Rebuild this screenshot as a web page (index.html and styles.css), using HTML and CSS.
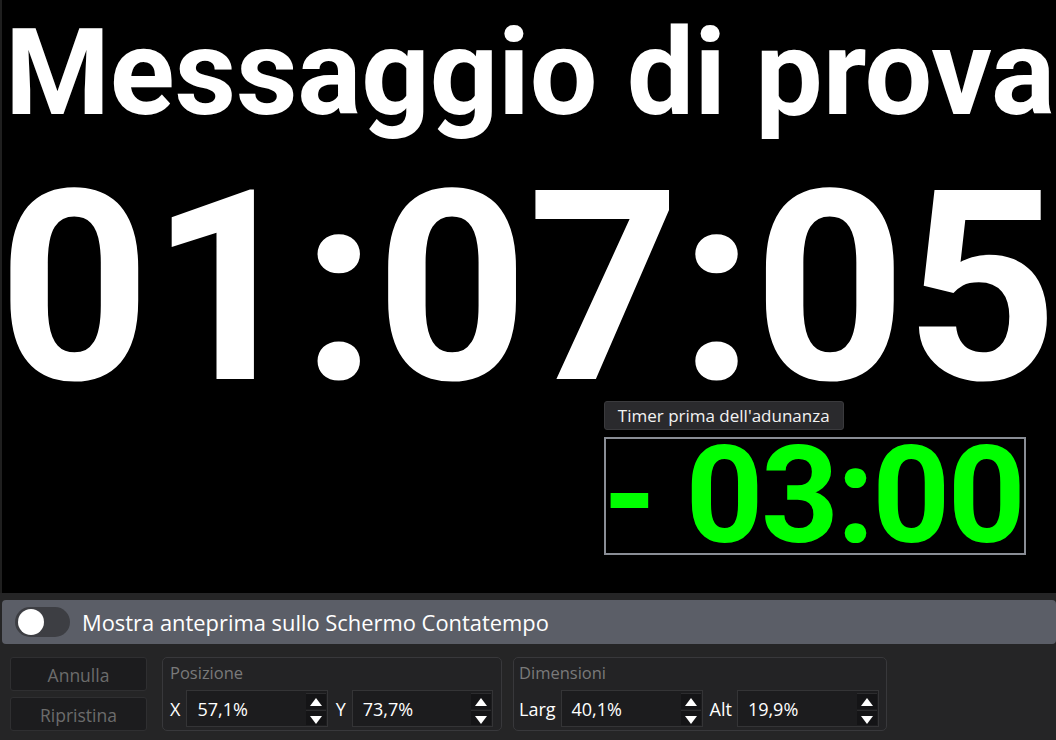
FILE: index.html
```html
<!DOCTYPE html>
<html lang="it">
<head>
<meta charset="utf-8">
<title>Contatempo</title>
<link rel="stylesheet" href="styles.css">
</head>
<body>
<div class="app">
  <div class="stage">
    <div class="title">Messaggio di prova</div>
    <div class="clock">01:07:05</div>
    <div class="overlay" style="left:57.1%;top:73.7%;width:40.1%;height:19.9%;">
      <div class="overlay-label">Timer prima dell'adunanza</div>
      <div class="overlay-box"><div class="overlay-time">- 03:00</div></div>
    </div>
  </div>
  <div class="panel">
    <div class="toggle-bar">
      <span class="switch"><span class="knob"></span></span>
      <span class="toggle-text">Mostra anteprima sullo Schermo Contatempo</span>
    </div>
    <div class="controls">
      <div class="btns">
        <div class="btn">Annulla</div>
        <div class="btn">Ripristina</div>
      </div>
      <div class="group group-pos">
        <div class="group-title">Posizione</div>
        <div class="group-row">
          <span class="field-label">X</span>
          <div class="spin"><span class="spin-value">57,1%</span><span class="spin-btns"><span class="spin-up"></span><span class="spin-down"></span></span></div>
          <span class="field-label">Y</span>
          <div class="spin"><span class="spin-value">73,7%</span><span class="spin-btns"><span class="spin-up"></span><span class="spin-down"></span></span></div>
        </div>
      </div>
      <div class="group group-dim">
        <div class="group-title">Dimensioni</div>
        <div class="group-row">
          <span class="field-label">Larg</span>
          <div class="spin"><span class="spin-value">40,1%</span><span class="spin-btns"><span class="spin-up"></span><span class="spin-down"></span></span></div>
          <span class="field-label">Alt</span>
          <div class="spin"><span class="spin-value">19,9%</span><span class="spin-btns"><span class="spin-up"></span><span class="spin-down"></span></span></div>
        </div>
      </div>
    </div>
  </div>
</div>
</body>
</html>
```

FILE: styles.css
```css
* { box-sizing: border-box; }
html, body {
  margin: 0;
  padding: 0;
  background: #252526;
  width: 1056px;
  height: 740px;
  overflow: hidden;
  font-family: "Open Sans", "Noto Sans", sans-serif;
}
.app {
  display: flex;
  flex-direction: column;
  height: 740px;
}
.stage {
  position: relative;
  height: 593px;
  background: #000;
  border-left: 2px solid #1f1f1f;
  overflow: hidden;
  font-family: Roboto, sans-serif;
  font-weight: 700;
  color: #fff;
}
.title {
  font-size: 120px;
  line-height: 120px;
  padding-top: 13px;
  padding-left: 3px;
  letter-spacing: -0.2px;
  white-space: nowrap;
}
.clock {
  font-size: 266px;
  line-height: 266px;
  margin-top: 22px;
  margin-left: -4px;
  letter-spacing: -0.8px;
  white-space: nowrap;
}
.overlay {
  position: absolute;
}
.overlay-label {
  position: absolute;
  left: 0;
  bottom: calc(100% + 7px);
  height: 29px;
  padding: 0 13px;
  background: #2a2a2d;
  border: 1px solid #3a3a3d;
  border-radius: 3px;
  font-family: "Open Sans", "Noto Sans", sans-serif;
  font-weight: 400;
  font-size: 17px;
  line-height: 27px;
  color: #f2f2f2;
  white-space: nowrap;
}
.overlay-box {
  width: 100%;
  height: 100%;
  border: 2px solid #898d95;
  display: flex;
  align-items: center;
  justify-content: center;
}
.overlay-time {
  color: #00ff00;
  font-size: 136px;
  height: 110px;
  line-height: 110px;
  white-space: pre;
  letter-spacing: -2.5px;
  margin-left: -4px;
}
.panel {
  flex: 1;
  padding-top: 7px;
}
.toggle-bar {
  margin-left: 2px;
  height: 44px;
  background: #5b5e67;
  border-radius: 4px;
  display: flex;
  align-items: center;
  padding-left: 13px;
  gap: 12px;
}
.switch {
  width: 55px;
  height: 30px;
  border-radius: 15px;
  background: #3d3e43;
  display: flex;
  align-items: center;
  padding-left: 3px;
}
.knob {
  width: 26px;
  height: 26px;
  border-radius: 50%;
  background: #fff;
}
.toggle-text {
  color: #fff;
  font-size: 21.9px;
  white-space: nowrap;
}
.controls {
  display: flex;
  margin-top: 13px;
  padding-left: 10px;
  gap: 15px;
}
.btns {
  display: flex;
  flex-direction: column;
  gap: 6px;
  width: 137px;
}
.btn {
  height: 34px;
  background: #1c1c1e;
  border: 1px solid #2f2f31;
  border-radius: 3px;
  color: #6c6c6c;
  font-size: 17.5px;
  line-height: 34px;
  text-align: center;
}
.group {
  height: 74px;
  border: 1px solid #38383b;
  border-radius: 5px;
  background: #232325;
  padding: 2px 0 0 7px;
}
.group-pos { width: 340px; }
.group-dim { width: 374px; margin-left: -4px; padding-left: 5px; }
.group-title {
  color: #7a7a7a;
  font-size: 16.5px;
  line-height: 26px;
}
.group-row {
  display: flex;
  align-items: center;
  margin-top: 4px;
}
.field-label {
  color: #fff;
  font-size: 18px;
  margin-right: 6px;
}
.group-dim .field-label { margin-right: 5px; }
.spin {
  position: relative;
  width: 143px;
  height: 37px;
  background: #1c1c1e;
  border: 1px solid #343436;
  display: flex;
  align-items: center;
  margin-right: 8px;
}
.group-dim .spin { width: 142px; margin-right: 7px; }
.spin-value {
  color: #fff;
  font-size: 18px;
  padding-left: 10px;
}
.spin-btns {
  position: absolute;
  right: 1px;
  top: 2px;
  bottom: 1px;
  width: 20px;
  display: flex;
  flex-direction: column;
  gap: 1px;
}
.spin-up, .spin-down {
  flex: 1;
  background: #141416;
  border-top: 1px solid #2c2c2e;
  position: relative;
}
.spin-up::after, .spin-down::after {
  content: "";
  position: absolute;
  left: 4px;
  width: 0;
  height: 0;
  border-left: 6px solid transparent;
  border-right: 6px solid transparent;
}
.spin-up::after {
  top: 4px;
  border-bottom: 8px solid #fff;
}
.spin-down::after {
  top: 5px;
  border-top: 8px solid #fff;
}
```
